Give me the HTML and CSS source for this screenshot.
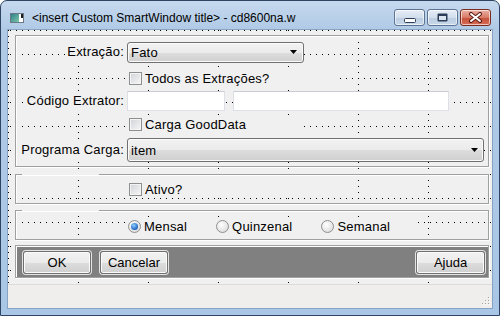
FILE: index.html
```html
<!DOCTYPE html>
<html lang="pt">
<head>
  <meta charset="UTF-8" />
  <title>cd8600na.w</title>
  <link rel="stylesheet" href="styles.css">
</head>
<body>

<div class="window">
  <div class="titlebar">
    <svg class="app-icon" width="14" height="10" viewBox="0 0 14 10">
      <defs>
        <linearGradient id="ico" x1="0" x2="1" y1="0" y2="1">
          <stop offset="0" stop-color="#2f7f8c"/>
          <stop offset="1" stop-color="#7cc7a8"/>
        </linearGradient>
      </defs>
      <rect x="0.5" y="0.5" width="13" height="9" fill="#fff" stroke="#6b7785"/>
      <rect x="1" y="1" width="8" height="8" fill="url(#ico)"/>
      <rect x="11" y="1" width="2" height="4" fill="#1b1b1b"/>
    </svg>
    <span class="title">&lt;insert Custom SmartWindow title&gt; - cd8600na.w</span>
    <div class="caption">
      <span class="cap">
        <svg width="12" height="5" viewBox="0 0 12 5"><rect x="0.5" y="0.5" width="11" height="4" rx="1" fill="#fff" stroke="#2c3e57"/></svg>
      </span>
      <span class="cap">
        <svg width="11" height="9" viewBox="0 0 11 9"><rect x="0.5" y="0.5" width="10" height="8" rx="1" fill="#2c3e57"/><rect x="2" y="3" width="7" height="4" fill="#dbe5f1"/></svg>
      </span>
      <span class="cap close">
        <svg width="15" height="11" viewBox="0 0 15 11">
          <path d="M3 2 L12 9 M12 2 L3 9" stroke="#5a1a12" stroke-width="4" stroke-linecap="round"/>
          <path d="M3 2 L12 9 M12 2 L3 9" stroke="#fff" stroke-width="2" stroke-linecap="round"/>
        </svg>
      </span>
    </div>
  </div>

  <div class="client">
    <div class="design">

      <div class="frame frame-main">
        <div class="row r1">
          <div class="lbl"><span>Extração:</span></div>
          <div class="combo combo-short"><span>Fato</span><i class="arrow"></i></div>
        </div>
        <div class="row r2">
          <div class="lbl"></div>
          <label class="check check-todos"><i class="box"></i><span>Todos as Extrações?</span></label>
        </div>
        <div class="row r3">
          <div class="lbl"><span>Código Extrator:</span></div>
          <div class="fill fill-code"></div>
          <div class="fill fill-desc"></div>
        </div>
        <div class="row r4">
          <div class="lbl"></div>
          <label class="check check-carga"><i class="box"></i><span>Carga GoodData</span></label>
        </div>
        <div class="row r5">
          <div class="lbl"><span>Programa Carga:</span></div>
          <div class="combo combo-long"><span>item</span><i class="arrow"></i></div>
        </div>
      </div>

      <fieldset class="frame frame-small">
        <legend></legend>
        <div class="row">
          <div class="lbl"></div>
          <label class="check check-ativo"><i class="box"></i><span>Ativo?</span></label>
        </div>
      </fieldset>

      <fieldset class="frame frame-small frame-radio">
        <legend></legend>
        <div class="row">
          <div class="lbl"></div>
          <div class="radio-set">
            <label class="radio checked"><i class="dot"></i><span>Mensal</span></label>
            <label class="radio"><i class="dot"></i><span>Quinzenal</span></label>
            <label class="radio"><i class="dot"></i><span>Semanal</span></label>
          </div>
        </div>
      </fieldset>

      <div class="button-bar">
        <button class="btn">OK</button>
        <button class="btn">Cancelar</button>
        <button class="btn btn-help">Ajuda</button>
      </div>

    </div>
    <div class="statusbar">
      <svg class="grip" width="11" height="11" viewBox="0 0 11 11">
        <g fill="#fff"><rect x="9" y="2" width="1" height="1"/><rect x="9" y="5" width="1" height="1"/><rect x="6" y="5" width="1" height="1"/><rect x="9" y="8" width="1" height="1"/><rect x="6" y="8" width="1" height="1"/><rect x="3" y="8" width="1" height="1"/></g>
        <g fill="#a3a3a3"><rect x="8" y="1" width="1" height="1"/><rect x="8" y="4" width="1" height="1"/><rect x="5" y="4" width="1" height="1"/><rect x="8" y="7" width="1" height="1"/><rect x="5" y="7" width="1" height="1"/><rect x="2" y="7" width="1" height="1"/></g>
      </svg>
    </div>
  </div>
</div>

</body>
</html>
```

FILE: styles.css
```css
* { box-sizing: border-box; }
body { margin: 0; background: #fff; font-family: "Liberation Sans", Arial, sans-serif; font-size: 13px; letter-spacing: 0.2px; color: #000; }

/* window chrome */
.window { width: 500px; height: 316px; border: 1px solid #2d4562; border-radius: 7px 7px 0 0; background: linear-gradient(#c6d9ee, #b0cae6 28px, #a9c6e6); display: flex; flex-direction: column; overflow: hidden; }
.titlebar { height: 29px; display: flex; align-items: flex-start; padding: 8px 8px 0 9px; }
.app-icon { margin-top: 4px; flex: none; }
.title { margin: 2px 0 0 8px; font-size: 12px; line-height: 14px; letter-spacing: 0; flex: 1; white-space: nowrap; }
.caption { display: flex; gap: 2px; }
.cap { width: 31px; height: 17px; border: 1px solid #5c7391; border-radius: 3px; display: flex; align-items: center; justify-content: center; background: linear-gradient(#e6edf6, #d2deec 50%, #bccde2 51%, #c9d8ea); box-shadow: inset 0 0 0 1px rgba(255,255,255,0.6); }
.cap.close { border-color: #7b2c20; background: linear-gradient(#eab1a4, #d87a66 50%, #c5503c 51%, #d66c55); }
.cap svg { display: block; }
.cap:first-child svg { margin-top: 6px; }

.client { margin: 0 7px; height: 278px; display: flex; flex-direction: column; box-shadow: 0 0 0 1px #86a3c4; }

/* AppBuilder design grid */
.design { height: 254px; padding: 5px 0 0 7px; background-color: #f0f0f0;
  background-image: conic-gradient(at 1px 1px, transparent 75%, #000 0), conic-gradient(at 1px 1px, transparent 75%, #000 0);
  background-size: 6px 24px, 70px 6px; background-position: 2px 0, 0 0; }

.frame { width: 474px; border: 1px solid #a0a0a0; box-shadow: inset 1px 1px #fff, 1px 1px #fff; margin: 0; padding: 0; min-width: 0; }
.frame-main { height: 132px; padding-bottom: 2px; }
.frame-small { height: 30px; margin-top: 7px; }
.frame-radio { margin-top: 6px; padding-top: 3px; }
.frame legend { width: 77px; height: 1px; margin-left: 6px; padding: 0; font-size: 0; background: #f0f0f0; }

.row { display: flex; align-items: center; height: 28px; }
.r1 { height: 32px; }
.r2 { height: 20px; }
.r3 { height: 25px; }
.r4 { height: 23px; }
.r5 { height: 28px; }
.frame-radio .row { height: 25px; }

.lbl { width: 111px; flex: none; display: flex; justify-content: flex-end; }
.lbl span { background: #f0f0f0; height: 20px; line-height: 20px; padding: 0 3px 0 2px; white-space: nowrap; }

/* widgets */
.combo { height: 21px; border: 1px solid #707070; border-radius: 3px; display: flex; align-items: center; justify-content: space-between; padding: 0 6px 0 3px; background: linear-gradient(#f2f2f2, #ebebeb 50%, #dddddd 51%, #cfcfcf); box-shadow: inset 0 0 0 1px #fbfbfb; }
.combo-short { width: 177px; }
.combo-long { width: 357px; height: 24px; padding-right: 5px; }
.arrow { width: 7px; height: 4px; background: #000; clip-path: polygon(0 0, 100% 0, 50% 100%); }

.fill { height: 20px; background: #fff; border: 1px solid #dde1e7; border-top-color: #c9ccd3; }
.fill-code { width: 98px; }
.fill-desc { width: 216px; margin-left: 8px; }

.check, .radio { display: flex; align-items: center; background: #f0f0f0; height: 18px; padding-left: 2px; }
.check-todos { width: 208px; }
.check-carga { width: 174px; }
.check-ativo { width: 170px; }
.box { width: 13px; height: 13px; border: 1px solid #8e8f8f; background: linear-gradient(135deg, #d0d3d8, #f7f7f7); box-shadow: inset 0 0 0 1px #f4f4f4; margin-right: 3px; flex: none; }

.radio-set { display: flex; gap: 28px; background: #f0f0f0; width: 290px; height: 18px; }
.radio { padding-left: 1px; }
.dot { width: 13px; height: 13px; border-radius: 50%; border: 1px solid #8e8f8f; background: radial-gradient(circle at 40% 35%, #fff, #d4d4d4); margin-right: 3px; flex: none; display: flex; align-items: center; justify-content: center; }
.radio.checked .dot::after { content: ""; width: 7px; height: 7px; border-radius: 50%; background: radial-gradient(circle at 40% 35%, #8fd0ff, #1d62c0 70%, #0f3f8a); }

/* button bar */
.button-bar { width: 474px; height: 33px; margin-top: 5px; border: 1px solid #a0a0a0; box-shadow: inset 1px 1px #fff, 1px 1px #fff; background: #808080; display: flex; align-items: flex-start; padding: 5px 3px 0 7px; gap: 9px; }
.btn { width: 68px; height: 23px; font: inherit; color: #000; border: 1px solid #707070; border-radius: 3px; background: linear-gradient(#f2f2f2, #ebebeb 50%, #dddddd 51%, #cfcfcf); box-shadow: 0 0 0 1px #e4e4e4, inset 0 0 0 1px #fbfbfb; padding: 0; }
.btn-help { width: 69px; margin-left: auto; }

.statusbar { height: 24px; background: #efeeec; border-top: 1px solid #dcdcdc; display: flex; justify-content: flex-end; align-items: flex-end; padding: 0 1px 1px 0; }
```
